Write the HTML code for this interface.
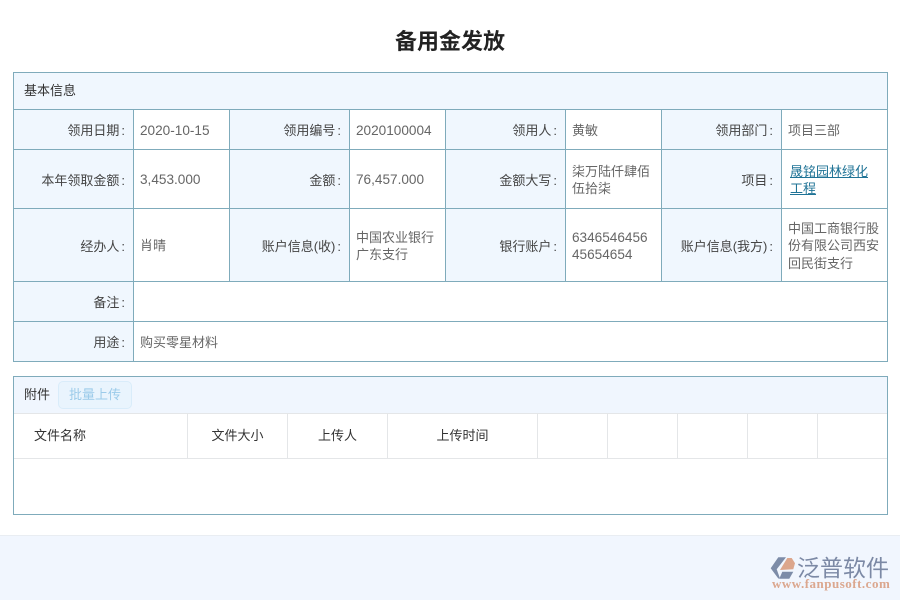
<!DOCTYPE html>
<html lang="zh">
<head>
<meta charset="utf-8">
<title>备用金发放</title>
<style>
html,body{margin:0;padding:0;background:#fff}
body{position:relative;width:900px;height:600px;overflow:hidden;font-family:"Liberation Sans","Noto Sans CJK SC",sans-serif;font-size:13px}
div,a,svg{position:absolute;box-sizing:border-box}
.title{left:0;top:25px;width:900px;text-align:center;font-size:22px;line-height:34px;font-weight:bold;color:#222}
.bg{background:#f0f7fe}
.h{background:#7fabbb}
.g{background:#e4e6e8}
.t{display:flex;align-items:center;line-height:17.5px;color:#666;padding:2px 2px 0 6px;word-break:break-all}
.l{display:flex;align-items:center;justify-content:flex-end;color:#444;padding:2px 8px 0 0;white-space:nowrap;line-height:17px}
.l i{font-style:normal;margin-left:2px}
.n{font-size:13.6px}
.c{display:flex;align-items:center;justify-content:center;color:#333;top:412px;height:44px;white-space:nowrap}
</style>
</head>
<body>
<div class="title">备用金发放</div>

<div class="bg" style="left:13px;top:72px;width:875px;height:38px"></div>
<div class="bg" style="left:13px;top:110px;width:121px;height:252px"></div>
<div class="bg" style="left:229px;top:110px;width:121px;height:172px"></div>
<div class="bg" style="left:445px;top:110px;width:121px;height:172px"></div>
<div class="bg" style="left:661px;top:110px;width:121px;height:172px"></div>

<div class="h" style="left:13px;top:72px;width:875px;height:1px"></div>
<div class="h" style="left:13px;top:109px;width:875px;height:1px"></div>
<div class="h" style="left:13px;top:149px;width:875px;height:1px"></div>
<div class="h" style="left:13px;top:208px;width:875px;height:1px"></div>
<div class="h" style="left:13px;top:281px;width:875px;height:1px"></div>
<div class="h" style="left:13px;top:321px;width:875px;height:1px"></div>
<div class="h" style="left:13px;top:361px;width:875px;height:1px"></div>
<div class="h" style="left:13px;top:72px;width:1px;height:290px"></div>
<div class="h" style="left:887px;top:72px;width:1px;height:290px"></div>
<div class="h" style="left:133px;top:109px;width:1px;height:252px"></div>
<div class="h" style="left:229px;top:109px;width:1px;height:172px"></div>
<div class="h" style="left:349px;top:109px;width:1px;height:172px"></div>
<div class="h" style="left:445px;top:109px;width:1px;height:172px"></div>
<div class="h" style="left:565px;top:109px;width:1px;height:172px"></div>
<div class="h" style="left:661px;top:109px;width:1px;height:172px"></div>
<div class="h" style="left:781px;top:109px;width:1px;height:172px"></div>

<div style="left:24px;top:82px;line-height:17px;color:#333">基本信息</div>

<div class="l" style="left:14px;top:110px;width:119px;height:39px">领用日期<i>:</i></div>
<div class="t n" style="left:134px;top:110px;width:95px;height:39px">2020-10-15</div>
<div class="l" style="left:230px;top:110px;width:119px;height:39px">领用编号<i>:</i></div>
<div class="t n" style="left:350px;top:110px;width:95px;height:39px">2020100004</div>
<div class="l" style="left:446px;top:110px;width:119px;height:39px">领用人<i>:</i></div>
<div class="t" style="left:566px;top:110px;width:95px;height:39px">黄敏</div>
<div class="l" style="left:662px;top:110px;width:119px;height:39px">领用部门<i>:</i></div>
<div class="t" style="left:782px;top:110px;width:105px;height:39px">项目三部</div>

<div class="l" style="left:14px;top:150px;width:119px;height:58px">本年领取金额<i>:</i></div>
<div class="t n" style="left:134px;top:150px;width:95px;height:58px">3,453.000</div>
<div class="l" style="left:230px;top:150px;width:119px;height:58px">金额<i>:</i></div>
<div class="t n" style="left:350px;top:150px;width:95px;height:58px">76,457.000</div>
<div class="l" style="left:446px;top:150px;width:119px;height:58px">金额大写<i>:</i></div>
<div class="t" style="left:566px;top:150px;width:95px;height:58px">柒万陆仟肆佰<br>伍拾柒</div>
<div class="l" style="left:662px;top:150px;width:119px;height:58px">项目<i>:</i></div>
<div class="t" style="left:782px;top:150px;width:105px;height:58px;padding-left:8px;color:#1f7396;text-decoration:underline">晟铭园林绿化<br>工程</div>

<div class="l" style="left:14px;top:209px;width:119px;height:72px">经办人<i>:</i></div>
<div class="t" style="left:134px;top:209px;width:95px;height:72px">肖晴</div>
<div class="l" style="left:230px;top:209px;width:119px;height:72px">账户信息(收)<i>:</i></div>
<div class="t" style="left:350px;top:209px;width:95px;height:72px">中国农业银行<br>广东支行</div>
<div class="l" style="left:446px;top:209px;width:119px;height:72px">银行账户<i>:</i></div>
<div class="t n" style="left:566px;top:209px;width:95px;height:72px">6346546456<br>45654654</div>
<div class="l" style="left:662px;top:209px;width:119px;height:72px">账户信息(我方)<i>:</i></div>
<div class="t" style="left:782px;top:209px;width:105px;height:72px">中国工商银行股<br>份有限公司西安<br>回民街支行</div>

<div class="l" style="left:14px;top:282px;width:119px;height:39px">备注<i>:</i></div>
<div class="l" style="left:14px;top:322px;width:119px;height:39px">用途<i>:</i></div>
<div class="t" style="left:134px;top:322px;width:300px;height:39px">购买零星材料</div>

<!-- attachments -->
<div class="bg" style="left:13px;top:376px;width:875px;height:38px;background:#f0f6fe"></div>
<div class="g" style="left:14px;top:413px;width:873px;height:1px"></div>
<div class="g" style="left:14px;top:458px;width:873px;height:1px"></div>
<div class="g" style="left:187px;top:414px;width:1px;height:44px"></div>
<div class="g" style="left:287px;top:414px;width:1px;height:44px"></div>
<div class="g" style="left:387px;top:414px;width:1px;height:44px"></div>
<div class="g" style="left:537px;top:414px;width:1px;height:44px"></div>
<div class="g" style="left:607px;top:414px;width:1px;height:44px"></div>
<div class="g" style="left:677px;top:414px;width:1px;height:44px"></div>
<div class="g" style="left:747px;top:414px;width:1px;height:44px"></div>
<div class="g" style="left:817px;top:414px;width:1px;height:44px"></div>
<div class="h" style="left:13px;top:376px;width:875px;height:1px"></div>
<div class="h" style="left:13px;top:514px;width:875px;height:1px"></div>
<div class="h" style="left:13px;top:376px;width:1px;height:139px"></div>
<div class="h" style="left:887px;top:376px;width:1px;height:139px"></div>

<div style="left:24px;top:386px;line-height:17px;color:#333">附件</div>
<div style="left:58px;top:381px;width:74px;height:28px;border:1px solid #d9ecfa;border-radius:5px;background:#e9f4fd;color:#9ccbea;display:flex;align-items:center;justify-content:center;padding-bottom:3px">批量上传</div>

<div class="c" style="left:34px">文件名称</div>
<div class="c" style="left:188px;width:99px">文件大小</div>
<div class="c" style="left:288px;width:99px">上传人</div>
<div class="c" style="left:388px;width:149px">上传时间</div>

<!-- footer -->
<div style="left:0;top:535px;width:900px;height:65px;background:#f1f6fe;border-top:1px solid #e9edf2"></div>
<svg style="left:768px;top:553px" width="30" height="28" viewBox="0 0 30 28">
<path d="M10.300 4.300H18L12 12 8.700 16.300 12 25.500H10.300L2.700 15.300Z" fill="#7d8ca8"/>
<path d="M12 17L19.300 5H23.700L27 10.300 25.300 16.300Z" fill="#dca68c"/>
<path d="M14.300 18.700H25.300L21.300 25.700H11.300Z" fill="#7d8ca8"/>
</svg>
<div style="left:797px;top:552px;font-size:23px;line-height:28px;color:#7c89a5;white-space:nowrap;font-family:'Noto Sans CJK SC',sans-serif">泛普软件</div>
<div style="left:772px;top:577px;font-family:'Liberation Serif',serif;font-weight:bold;font-size:13px;letter-spacing:.5px;line-height:14px;color:#dba78f;white-space:nowrap">www.fanpusoft.com</div>
</body>
</html>
